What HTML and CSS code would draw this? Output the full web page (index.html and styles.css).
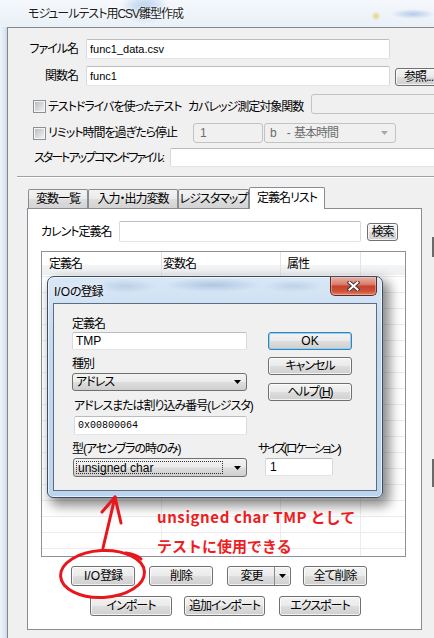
FILE: index.html
```html
<!DOCTYPE html>
<html lang="ja">
<head>
<meta charset="utf-8">
<title>モジュールテスト用CSV雛型作成</title>
<link rel="stylesheet" href="styles.css">
</head>
<body>
<div class="titlebar"><span class="title">モジュールテスト用CSV雛型作成</span></div>
<div class="frame">
  <div class="side"></div>
  <div class="main">
    <div class="row r1">
      <span class="lbl">ファイル名</span>
      <div class="input wide latin">func1_data.csv</div>
    </div>
    <div class="row r2">
      <span class="lbl">関数名</span>
      <div class="input wide latin">func1</div>
      <div class="btn ref">参照...</div>
    </div>
    <div class="row r3">
      <span class="check"></span>
      <span class="ctext c1">テストドライバを使ったテスト</span>
      <span class="cov">カバレッジ測定対象関数</span>
      <div class="input dis covin"></div>
    </div>
    <div class="row r4">
      <span class="check"></span>
      <span class="ctext c2">リミット時間を過ぎたら停止</span>
      <div class="input dis limit latin">1</div>
      <div class="combo dis unit"><span><span class="latin">b&nbsp;&nbsp;&nbsp;-&nbsp;</span>基本時間</span><svg class="arr" width="7" height="4" viewBox="0 0 7 4"><path d="M0 0H7L3.5 4Z"/></svg></div>
    </div>
    <div class="row r5">
      <span class="startlbl">スタートアップコマンドファイル:</span>
      <div class="input startin"></div>
    </div>
    <div class="sep"></div>
    <div class="tabs">
      <div class="tab t1">変数一覧</div>
      <div class="tab t2">入力・出力変数</div>
      <div class="tab t3">レジスタマップ</div>
      <div class="tab t4 sel">定義名リスト</div>
    </div>
    <div class="tabarea">
      <div class="tabbody">
        <div class="row cur">
          <span class="curlbl">カレント定義名</span>
          <div class="input curin"></div>
          <div class="btn search">検索</div>
        </div>
        <div class="list">
          <div class="lhead">
            <span class="hc h1">定義名</span>
            <span class="hc h2">変数名</span>
            <span class="hc h3">属性</span>
            <span class="hc h4"></span>
          </div>
          <div class="lbody"></div>
        </div>
        <div class="brow b1">
          <div class="btn w64"><span class="latin">I/O</span>登録</div>
          <div class="btn w64 g14">削除</div>
          <div class="btn split g14"><span class="sl">変更</span><span class="sr"><svg width="7" height="4" viewBox="0 0 7 4"><path d="M0 0H7L3.5 4Z"/></svg></span></div>
          <div class="btn w64 g12">全て削除</div>
        </div>
        <div class="brow b2">
          <div class="btn w82">インポート</div>
          <div class="btn w81 g12">追加インポート</div>
          <div class="btn w82 g14">エクスポート</div>
        </div>
      </div>
      <div class="gutter"><span class="mark m1"></span><span class="mark m2"></span></div>
    </div>
  </div>
</div>

<div class="dialog">
  <div class="dhead">
    <span class="dtitle"><span class="latin">I/O</span>の登録</span>
    <div class="close"><svg width="13" height="10" viewBox="0 0 13 10"><path d="M2.5 1.5L10.5 8.5M10.5 1.5L2.5 8.5" stroke="#3a3a3a" stroke-width="4" stroke-linecap="square"/><path d="M2.5 1.5L10.5 8.5M10.5 1.5L2.5 8.5" stroke="#fff" stroke-width="2" stroke-linecap="square"/></svg></div>
  </div>
  <div class="client">
    <div class="dtop">
      <div class="lcol">
        <div class="dl">定義名</div>
        <div class="input dtmp latin">TMP</div>
        <div class="dl dl2">種別</div>
        <div class="combo dkind"><span>アドレス</span><svg class="arr" width="7" height="4" viewBox="0 0 7 4"><path d="M0 0H7L3.5 4Z"/></svg></div>
        <div class="dl dl3">アドレスまたは割り込み番号(レジスタ)</div>
        <div class="input daddr latin">0x00800064</div>
      </div>
      <div class="rcol">
        <div class="btn dbtn ok latin">OK</div>
        <div class="btn dbtn cancel">キャンセル</div>
        <div class="btn dbtn help">ヘルプ(<u>H</u>)</div>
      </div>
    </div>
    <div class="dbottom">
      <div class="bl">
        <div class="dl">型(アセンブラの時のみ)</div>
        <div class="combo dtype"><span class="frect latin">unsigned char</span><svg class="arr" width="7" height="4" viewBox="0 0 7 4"><path d="M0 0H7L3.5 4Z"/></svg></div>
      </div>
      <div class="br">
        <div class="dl size">サイズ(ロケーション)</div>
        <div class="input dsize latin">1</div>
      </div>
    </div>
  </div>
</div>

<svg class="anno" width="434" height="638" viewBox="0 0 434 638">
  <g fill="none" stroke="#e8161d" stroke-width="3" stroke-linecap="round" stroke-linejoin="round">
    <ellipse cx="102.5" cy="574" rx="42" ry="23.5" transform="rotate(-3 102.5 574)"/>
    <path d="M126 553 C 132 554, 138 556, 141 559"/>
    <path d="M103 548 L115 497"/>
    <path d="M102 512 L115 497 L121 523"/>
  </g>
</svg>
<div class="note"><span class="nl">unsigned char TMP</span> として<br>テストに使用できる</div>
</body>
</html>
```
FILE: styles.css
```css
* { box-sizing: border-box; }
html, body { margin: 0; padding: 0; }
body {
  width: 434px;
  height: 638px;
  overflow: hidden;
  position: relative;
  font-family: "Liberation Sans", "Noto Sans CJK JP", sans-serif;
  font-size: 12px;
  line-height: 14px;
  letter-spacing: -1px;
  color: #000;
  font-feature-settings: "palt";
  background: #edf2f8;
}
.latin { letter-spacing: 0; }

.titlebar {
  height: 27px;
  padding-left: 28px;
  display: flex;
  align-items: center;
  background:
    radial-gradient(ellipse 24px 16px at 145px 8px, rgba(150, 188, 228, .75), transparent),
    radial-gradient(ellipse 5px 5px at 376px 16px, rgba(225, 195, 80, .7), transparent),
    radial-gradient(ellipse 22px 5px at 413px 14px, rgba(110, 150, 215, .45), transparent),
    linear-gradient(#f5f8fc, #e9f0f7);
}
.title { color: #1c1c1c; text-shadow: 0 0 6px #fff, 0 0 3px #fff; }

.frame { display: flex; height: 611px; }
.side { width: 7px; flex: none; background: linear-gradient(to right, #eef3f8, #dce7f2 70%, #c8d8e9); }
.main {
  width: 470px;
  flex: none;
  background: #f0f0f0;
  border-left: 1px solid #868686;
  border-top: 1px solid #868686;
}

.row { display: flex; align-items: center; }
.r1 { margin-top: 11px; height: 20px; }
.r2 { margin-top: 7px; height: 20px; }
.lbl { width: 70px; text-align: right; margin-right: 8px; white-space: nowrap; }

.input {
  background: #fff;
  border: 1px solid;
  border-color: #b9bcc1 #d6d9dd #e2e4e8 #d6d9dd;
  border-radius: 2px;
  height: 100%;
  display: flex;
  align-items: center;
  padding-left: 3px;
  white-space: nowrap;
}
.input.dis { background: #f0f0f0; border-color: #c3c3c3; color: #6d6d6d; border-radius: 3px; }
.wide { width: 304px; font-size: 11px; }

.btn {
  display: flex;
  align-items: center;
  justify-content: center;
  border: 1px solid #707070;
  border-radius: 3px;
  background: linear-gradient(#f3f3f3, #ebebeb 47%, #dddddd 53%, #cfcfcf);
  box-shadow: inset 0 0 0 1px rgba(255, 255, 255, .75);
  white-space: nowrap;
  height: 20px;
}
.ref { margin-left: 5px; width: 50px; height: 18px; align-self: flex-end; justify-content: flex-start; padding-left: 8px; }

.r3 { margin-top: 8px; height: 20px; padding-left: 25px; align-items: flex-start; }
.r3 .check, .r3 .ctext, .r3 .cov { margin-top: 6px; }
.check {
  width: 13px;
  height: 13px;
  flex: none;
  border: 1px solid #8e8f8f;
  background: linear-gradient(135deg, #b4b8be, #e9eaeb 80%);
  box-shadow: inset 0 0 0 1px #f6f6f6;
}
.ctext { margin-left: 2px; white-space: nowrap; flex: none; }
.c1 { width: 140px; }
.c2 { width: 145px; }
.cov { width: 123px; white-space: nowrap; flex: none; }
.covin { width: 140px; }

.r4 { margin-top: 9px; height: 20px; padding-left: 25px; }
.limit { width: 70px; padding-left: 6px; }
.combo {
  display: flex;
  align-items: center;
  justify-content: space-between;
  height: 100%;
  padding: 0 5px 0 3px;
  border: 1px solid #707070;
  border-radius: 3px;
  background: linear-gradient(#f3f3f3, #ebebeb 47%, #dddddd 53%, #cfcfcf);
  white-space: nowrap;
}
.combo.dis { background: #f0f0f0; border-color: #c3c3c3; color: #6d6d6d; }
.combo.dis .arr { fill: #a8a8a8; }
.unit { width: 132px; margin-left: 1px; padding-left: 5px; padding-right: 7px; }
.arr { flex: none; fill: #000; }

.r5 { margin-top: 5px; height: 19px; padding-left: 26px; }
.startlbl { width: 136px; white-space: nowrap; flex: none; letter-spacing: -2px; }
.startin { width: 300px; }

.sep { margin: 9px 0 0 9px; height: 2px; border-top: 1px solid #a0a0a0; border-bottom: 1px solid #fff; }

.tabs { margin: 9px 0 0 20px; height: 21px; display: flex; align-items: flex-end; }
.tab {
  height: 19px;
  border: 1px solid #898c95;
  border-bottom: none;
  border-radius: 2px 2px 0 0;
  background: linear-gradient(#f3f3f3, #ebebeb 47%, #dddddd 53%, #d3d3d3);
  display: flex;
  align-items: center;
  justify-content: center;
  white-space: nowrap;
}
.t1 { width: 60px; }
.t2 { width: 90px; }
.t3 { width: 71px; }
.t4 { width: 76px; }
.tab.sel {
  height: 22px;
  background: #fff;
  margin-bottom: -1px;
  position: relative;
  z-index: 1;
  padding-bottom: 1px;
}

.tabarea { display: flex; }
.tabbody {
  margin-left: 19px;
  width: 395px;
  height: 422px;
  border: 1px solid #898c95;
  background: #fff;
  padding: 12px 15px 0 13px;
}
.gutter { margin-left: 10px; width: 3px; display: flex; flex-direction: column; }
.mark { width: 3px; background: #6a6a6a; }
.m1 { margin-top: 29px; height: 20px; }
.m2 { margin-top: 202px; height: 28px; }

.cur { height: 21px; }
.curlbl { width: 78px; white-space: nowrap; flex: none; }
.curin { width: 242px; }
.search { margin-left: 6px; width: 31px; height: 18px; }

.list {
  margin-top: 9px;
  width: 365px;
  height: 306px;
  border: 1px solid #8e9197;
  background: #fff;
  display: flex;
  flex-direction: column;
}
.lhead {
  height: 23px;
  display: flex;
  background: linear-gradient(#ffffff 55%, #f3f4f6 56%, #eff0f2);
}
.hc { display: flex; align-items: center; border-right: 1px solid #e3e4e6; white-space: nowrap; }
.h1 { width: 120px; padding-left: 7px; }
.h2 { width: 119px; padding-left: 1px; }
.h3 { width: 80px; padding-left: 6px; }
.h4 { flex: 1; border-right: none; }
.lbody {
  flex: 1;
  background-image:
    linear-gradient(to right, transparent 119px, #ececec 119px 120px, transparent 120px 238px, #ececec 238px 239px, transparent 239px 318px, #ececec 318px 319px, transparent 319px),
    repeating-linear-gradient(to bottom, transparent 0 1px, #ececec 1px 2px, transparent 2px 16px);
}

.brow { display: flex; }
.b1 { margin-top: 9px; margin-left: 30px; }
.b2 { margin-top: 10px; margin-left: 49px; }
.w64 { width: 64px; }
.w81 { width: 81px; }
.w82 { width: 82px; }
.g12 { margin-left: 12px; }
.g14 { margin-left: 14px; }
.split { width: 64px; justify-content: flex-start; padding: 0; }
.sl { flex: 1; text-align: center; padding-left: 1px; }
.sr {
  width: 16px;
  height: 100%;
  border-left: 1px solid #8a8a8a;
  display: flex;
  align-items: center;
  justify-content: center;
}

/* dialog */
.dialog {
  position: absolute;
  left: 47px;
  top: 276px;
  width: 336px;
  height: 222px;
  border: 1px solid #3b4d61;
  border-radius: 7px 7px 6px 6px;
  padding: 0 5px 6px 5px;
  display: flex;
  flex-direction: column;
  background:
    radial-gradient(ellipse 30px 7px at 78px 9px, rgba(100, 130, 170, .22), transparent),
    radial-gradient(ellipse 48px 7px at 165px 8px, rgba(90, 125, 175, .3), transparent),
    radial-gradient(ellipse 30px 6px at 245px 9px, rgba(100, 130, 170, .2), transparent),
    linear-gradient(#d8e7f6, #c4daf0 30%, #bcd5ee);
  box-shadow: 5px 6px 12px 2px rgba(0, 0, 0, .45), inset 0 0 0 1px rgba(255, 255, 255, .6);
}
.dhead { height: 26px; flex: none; display: flex; align-items: flex-start; }
.dtitle { margin-top: 8px; padding-left: 1px; color: #000; text-shadow: 0 0 6px rgba(255,255,255,.9); }
.close {
  margin-left: auto;
  width: 47px;
  height: 19px;
  border: 1px solid #5a2a24;
  border-top: none;
  border-radius: 0 0 5px 5px;
  background: linear-gradient(#eab0a4, #d9806f 40%, #c8412c 52%, #cf5339 80%, #e0866a);
  box-shadow: inset 0 0 0 1px rgba(255, 210, 200, .45);
  display: flex;
  align-items: center;
  justify-content: center;
}
.client {
  flex: 1;
  border: 1px solid #5b6d82;
  background: #f0f0f0;
  padding: 13px 0 0 18px;
}
.dtop { display: flex; }
.lcol { width: 175px; flex: none; display: flex; flex-direction: column; }
.dl { height: 14px; line-height: 14px; white-space: nowrap; }
.dtmp { margin-top: 1px; height: 18px; }
.dl2 { margin-top: 7px; }
.dkind { margin-top: 2px; height: 18px; }
.dl3 { margin-top: 8px; margin-left: 2px; }
.daddr {
  margin-top: 3px;
  margin-left: 2px;
  height: 19px;
  font-family: "Liberation Mono", monospace;
  font-size: 10px;
}
.rcol { margin-left: 21px; padding-top: 15px; display: flex; flex-direction: column; }
.dbtn { width: 84px; height: 18px; }
.ok { border-color: #3c7fb1; box-shadow: inset 0 0 0 1px #8fd3f3; }
.cancel { margin-top: 7px; }
.help { margin-top: 8px; }
.dbottom { display: flex; margin-top: 7px; }
.bl { width: 175px; flex: none; }
.dtype { margin-top: 2px; margin-left: 1px; height: 19px; padding: 2px 5px 2px 2px; }
.frect { flex: 1; height: 100%; border: 1px dotted #333; margin-right: 11px; padding-left: 1px; display: flex; align-items: center; }
.br { margin-left: 11px; }
.size { letter-spacing: -2.2px; }
.dsize { margin-top: 2px; margin-left: 7px; width: 68px; height: 18px; padding-left: 4px; }

/* annotations */
.anno { position: absolute; left: 0; top: 0; pointer-events: none; }
.note {
  position: absolute;
  left: 157px;
  top: 502px;
  color: #ee1d23;
  font-family: "Noto Sans CJK JP", sans-serif;
  font-weight: bold;
  font-size: 15px;
  line-height: 29px;
  letter-spacing: 0;
  white-space: nowrap;
  font-feature-settings: normal;
}
.nl { letter-spacing: 0.6px; }
```
